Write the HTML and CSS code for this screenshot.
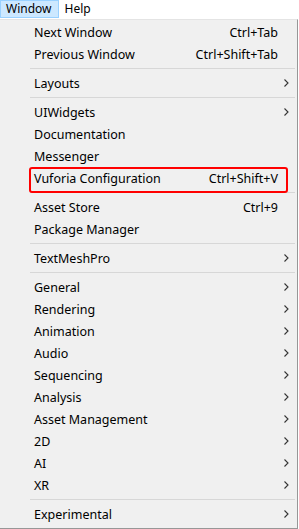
FILE: index.html
```html
<!DOCTYPE html>
<html lang="en">
  <head>
    <meta charset="UTF-8" />
    <meta name="viewport" content="width=device-width, initial-scale=1.0" />
    <title>Window Menu</title>
    <link rel="stylesheet" href="styles.css">
  </head>
  <body>
    <div class="menubar">
      <div class="menubar-item active">Window</div>
      <div class="menubar-item">Help</div>
    </div>
    <div class="menu">
      <div class="row"><span class="label">Next Window</span><span class="key">Ctrl+Tab</span><span class="arrow"></span></div>
      <div class="row"><span class="label">Previous Window</span><span class="key">Ctrl+Shift+Tab</span><span class="arrow"></span></div>
      <div class="sep"></div>
      <div class="row"><span class="label">Layouts</span><span class="arrow"><svg viewBox="0 0 5 8" width="5" height="8"><path d="M0.5 0.5 L4 4 L0.5 7.5" fill="none" stroke="#333" stroke-width="1.1"/></svg></span></div>
      <div class="sep"></div>
      <div class="row"><span class="label">UIWidgets</span><span class="arrow"><svg viewBox="0 0 5 8" width="5" height="8"><path d="M0.5 0.5 L4 4 L0.5 7.5" fill="none" stroke="#333" stroke-width="1.1"/></svg></span></div>
      <div class="row"><span class="label">Documentation</span><span class="arrow"></span></div>
      <div class="row"><span class="label">Messenger</span><span class="arrow"></span></div>
      <div class="row marked"><span class="label">Vuforia Configuration</span><span class="key">Ctrl+Shift+V</span><span class="arrow"></span></div>
      <div class="sep"></div>
      <div class="row"><span class="label">Asset Store</span><span class="key">Ctrl+9</span><span class="arrow"></span></div>
      <div class="row"><span class="label">Package Manager</span><span class="arrow"></span></div>
      <div class="sep"></div>
      <div class="row"><span class="label">TextMeshPro</span><span class="arrow"><svg viewBox="0 0 5 8" width="5" height="8"><path d="M0.5 0.5 L4 4 L0.5 7.5" fill="none" stroke="#333" stroke-width="1.1"/></svg></span></div>
      <div class="sep"></div>
      <div class="row"><span class="label">General</span><span class="arrow"><svg viewBox="0 0 5 8" width="5" height="8"><path d="M0.5 0.5 L4 4 L0.5 7.5" fill="none" stroke="#333" stroke-width="1.1"/></svg></span></div>
      <div class="row"><span class="label">Rendering</span><span class="arrow"><svg viewBox="0 0 5 8" width="5" height="8"><path d="M0.5 0.5 L4 4 L0.5 7.5" fill="none" stroke="#333" stroke-width="1.1"/></svg></span></div>
      <div class="row"><span class="label">Animation</span><span class="arrow"><svg viewBox="0 0 5 8" width="5" height="8"><path d="M0.5 0.5 L4 4 L0.5 7.5" fill="none" stroke="#333" stroke-width="1.1"/></svg></span></div>
      <div class="row"><span class="label">Audio</span><span class="arrow"><svg viewBox="0 0 5 8" width="5" height="8"><path d="M0.5 0.5 L4 4 L0.5 7.5" fill="none" stroke="#333" stroke-width="1.1"/></svg></span></div>
      <div class="row"><span class="label">Sequencing</span><span class="arrow"><svg viewBox="0 0 5 8" width="5" height="8"><path d="M0.5 0.5 L4 4 L0.5 7.5" fill="none" stroke="#333" stroke-width="1.1"/></svg></span></div>
      <div class="row"><span class="label">Analysis</span><span class="arrow"><svg viewBox="0 0 5 8" width="5" height="8"><path d="M0.5 0.5 L4 4 L0.5 7.5" fill="none" stroke="#333" stroke-width="1.1"/></svg></span></div>
      <div class="row"><span class="label">Asset Management</span><span class="arrow"><svg viewBox="0 0 5 8" width="5" height="8"><path d="M0.5 0.5 L4 4 L0.5 7.5" fill="none" stroke="#333" stroke-width="1.1"/></svg></span></div>
      <div class="row"><span class="label">2D</span><span class="arrow"><svg viewBox="0 0 5 8" width="5" height="8"><path d="M0.5 0.5 L4 4 L0.5 7.5" fill="none" stroke="#333" stroke-width="1.1"/></svg></span></div>
      <div class="row"><span class="label">AI</span><span class="arrow"><svg viewBox="0 0 5 8" width="5" height="8"><path d="M0.5 0.5 L4 4 L0.5 7.5" fill="none" stroke="#333" stroke-width="1.1"/></svg></span></div>
      <div class="row"><span class="label">XR</span><span class="arrow"><svg viewBox="0 0 5 8" width="5" height="8"><path d="M0.5 0.5 L4 4 L0.5 7.5" fill="none" stroke="#333" stroke-width="1.1"/></svg></span></div>
      <div class="sep"></div>
      <div class="row"><span class="label">Experimental</span><span class="arrow"><svg viewBox="0 0 5 8" width="5" height="8"><path d="M0.5 0.5 L4 4 L0.5 7.5" fill="none" stroke="#333" stroke-width="1.1"/></svg></span></div>
    </div>
  </body>
</html>
```
FILE: styles.css
```css
* {
  box-sizing: border-box;
  margin: 0;
  padding: 0;
}
body {
  font-family: "Noto Sans", "Open Sans", sans-serif;
  font-size: 12.5px;
  color: #000;
  background-color: #fff;
}
.menubar {
  display: flex;
  height: 19px;
  background-color: #fff;
}
.menubar-item {
  height: 18px;
  line-height: 16px;
  padding: 0 6px 0 5px;
  border: 1px solid transparent;
  font-size: 12px;
}
.menubar-item.active {
  background-color: #cce8ff;
  border-color: #99d1ff;
}
.menu {
  width: 298px;
  height: 510px;
  background-color: #f0f0f0;
  border-top: 1px solid #e4e4e4;
  border-right: 1px solid #979797;
  border-bottom: 1px solid #979797;
  padding: 1px 0 2px;
}
.row {
  position: relative;
  display: flex;
  align-items: center;
  height: 22px;
  padding-left: 34px;
}
.label {
  flex: 1;
}
.key {
  white-space: nowrap;
}
.arrow {
  width: 19px;
  display: flex;
  align-items: center;
  padding-left: 6px;
}
.sep {
  height: 7px;
  margin: 0 2px 0 30px;
  display: flex;
  align-items: center;
}
.sep::before {
  content: "";
  display: block;
  width: 100%;
  height: 1px;
  background-color: #d7d7d7;
}
.marked::after {
  content: "";
  position: absolute;
  left: 29px;
  top: 0;
  width: 255px;
  height: 22px;
  border: 2px solid #f00;
  border-radius: 3px;
}
```
